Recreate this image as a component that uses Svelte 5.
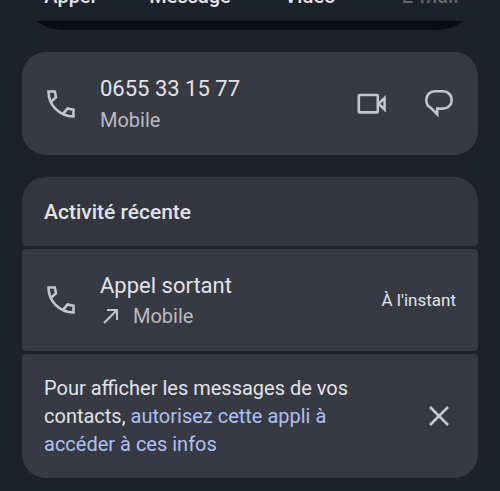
<script lang="ts">
	interface Shortcut {
		label: string;
		disabled?: boolean;
	}

	const shortcuts: Shortcut[] = [
		{ label: 'Appel' },
		{ label: 'Message' },
		{ label: 'Vidéo' },
		{ label: 'E-mail', disabled: true }
	];

	let showNotice = $state(true);
</script>

{#snippet phoneIcon()}
	<svg class="icon" viewBox="0 0 34 34" aria-hidden="true">
		<path
			d="M7.2 14.6L12 10.2L10.8 4.5H4.5C4.5 18.3 15.7 29.5 29.5 29.5V22.8L23.6 21.4L19.2 26.6"
		/>
	</svg>
{/snippet}

<main>
	<nav class="shortcuts" aria-label="Raccourcis">
		{#each shortcuts as { label, disabled }}
			<button {disabled}>{label}</button>
		{/each}
	</nav>

	<section class="group">
		<div class="card contact">
			{@render phoneIcon()}
			<div class="details">
				<div class="primary">0655 33 15 77</div>
				<div class="secondary">Mobile</div>
			</div>
			<div class="actions">
				<button class="icon-btn" aria-label="Appel vidéo">
					<svg class="icon" viewBox="0 0 34 34" aria-hidden="true">
						<rect x="3.8" y="8" width="19" height="17.4" rx="1" />
						<path d="M23.5 16.7L29.6 11V22.4Z" />
					</svg>
				</button>
				<button class="icon-btn" aria-label="Envoyer un message">
					<svg class="icon" viewBox="0 0 34 34" aria-hidden="true">
						<path
							d="M15.2 21.6V27.4L8.8 20.8C6 19.6 4.3 16.7 4.3 13C4.3 8 8 4.2 13 4.2H21C26 4.2 29.7 8 29.7 13C29.7 18 26 21.6 21 21.6Z"
						/>
					</svg>
				</button>
			</div>
		</div>
	</section>

	<section class="group">
		<header class="card">
			<h2>Activité récente</h2>
		</header>
		<div class="card call">
			{@render phoneIcon()}
			<div class="details">
				<div class="primary">Appel sortant</div>
				<div class="secondary">
					<svg class="arrow" viewBox="0 0 22 22" aria-hidden="true">
						<path d="M4 17L17 4M7 4H17V14" />
					</svg>
					Mobile
				</div>
			</div>
			<time>À l'instant</time>
		</div>
		{#if showNotice}
			<div class="card notice">
				<p>
					Pour afficher les messages de vos contacts,
					<a href="#autoriser">autorisez cette appli à accéder à ces infos</a>
				</p>
				<button class="icon-btn" aria-label="Fermer" onclick={() => (showNotice = false)}>
					<svg class="icon" viewBox="0 0 34 34" aria-hidden="true">
						<path d="M8 8L26 26M26 8L8 26" />
					</svg>
				</button>
			</div>
		{/if}
	</section>
</main>

<style>
	:global(body) {
		margin: 0;
		background: #1d2129;
	}

	main {
		display: flex;
		flex-direction: column;
		gap: 22px;
		padding: 0 22px 12px;
		color: #e1e2e9;
		font-family: Roboto, 'Noto Sans', sans-serif;
	}

	button {
		padding: 0;
		border: 0;
		background: none;
		color: inherit;
		font: inherit;
	}

	.shortcuts {
		display: grid;
		grid-template-columns: repeat(4, 120px);
		justify-content: center;
		margin-top: -35px;
		padding: 19px 0 22px;
		border-radius: 0 0 40px 40px;
		background: linear-gradient(to top, #0b0d15 9px, transparent 9px);

		& button {
			font-size: 20px;
			font-weight: 500;
			line-height: 24px;
		}

		& button:disabled {
			color: #62656d;
		}
	}

	.group {
		display: flex;
		flex-direction: column;
		gap: 3px;
		border-radius: 24px;
		overflow: hidden;
	}

	.card {
		display: flex;
		align-items: center;
		padding: 19px 22px;
		border-radius: 4px;
		background: #373a42;
	}

	header.card {
		padding: 22px 22px 20px;
		background: #33363e;
	}

	h2 {
		margin: 0;
		font-size: 21px;
		font-weight: 500;
		line-height: 27px;
	}

	.details {
		flex: 1;
		margin-left: 22px;
		padding-top: 3px;
	}

	.primary {
		font-size: 22px;
		line-height: 30px;
	}

	.secondary {
		display: flex;
		align-items: center;
		gap: 11px;
		color: #b9bbc4;
		font-size: 20px;
		line-height: 31px;
	}

	.contact .secondary {
		line-height: 32px;
	}

	.actions {
		display: flex;
		gap: 33px;
	}

	.icon-btn {
		display: flex;
		cursor: pointer;
	}

	.icon {
		flex: none;
		width: 34px;
		height: 34px;
		fill: none;
		stroke: #c3c5cf;
		stroke-width: 2.6;
	}

	.arrow {
		width: 22px;
		height: 22px;
		fill: none;
		stroke: #c3c5cf;
		stroke-width: 2;
	}

	time {
		font-size: 17px;
	}

	.notice {
		justify-content: space-between;
		gap: 60px;
		padding: 20px 22px;
	}

	p {
		margin: 0;
		font-size: 20px;
		line-height: 28px;
	}

	a {
		color: #adc0f3;
		text-decoration: none;
	}
</style>
